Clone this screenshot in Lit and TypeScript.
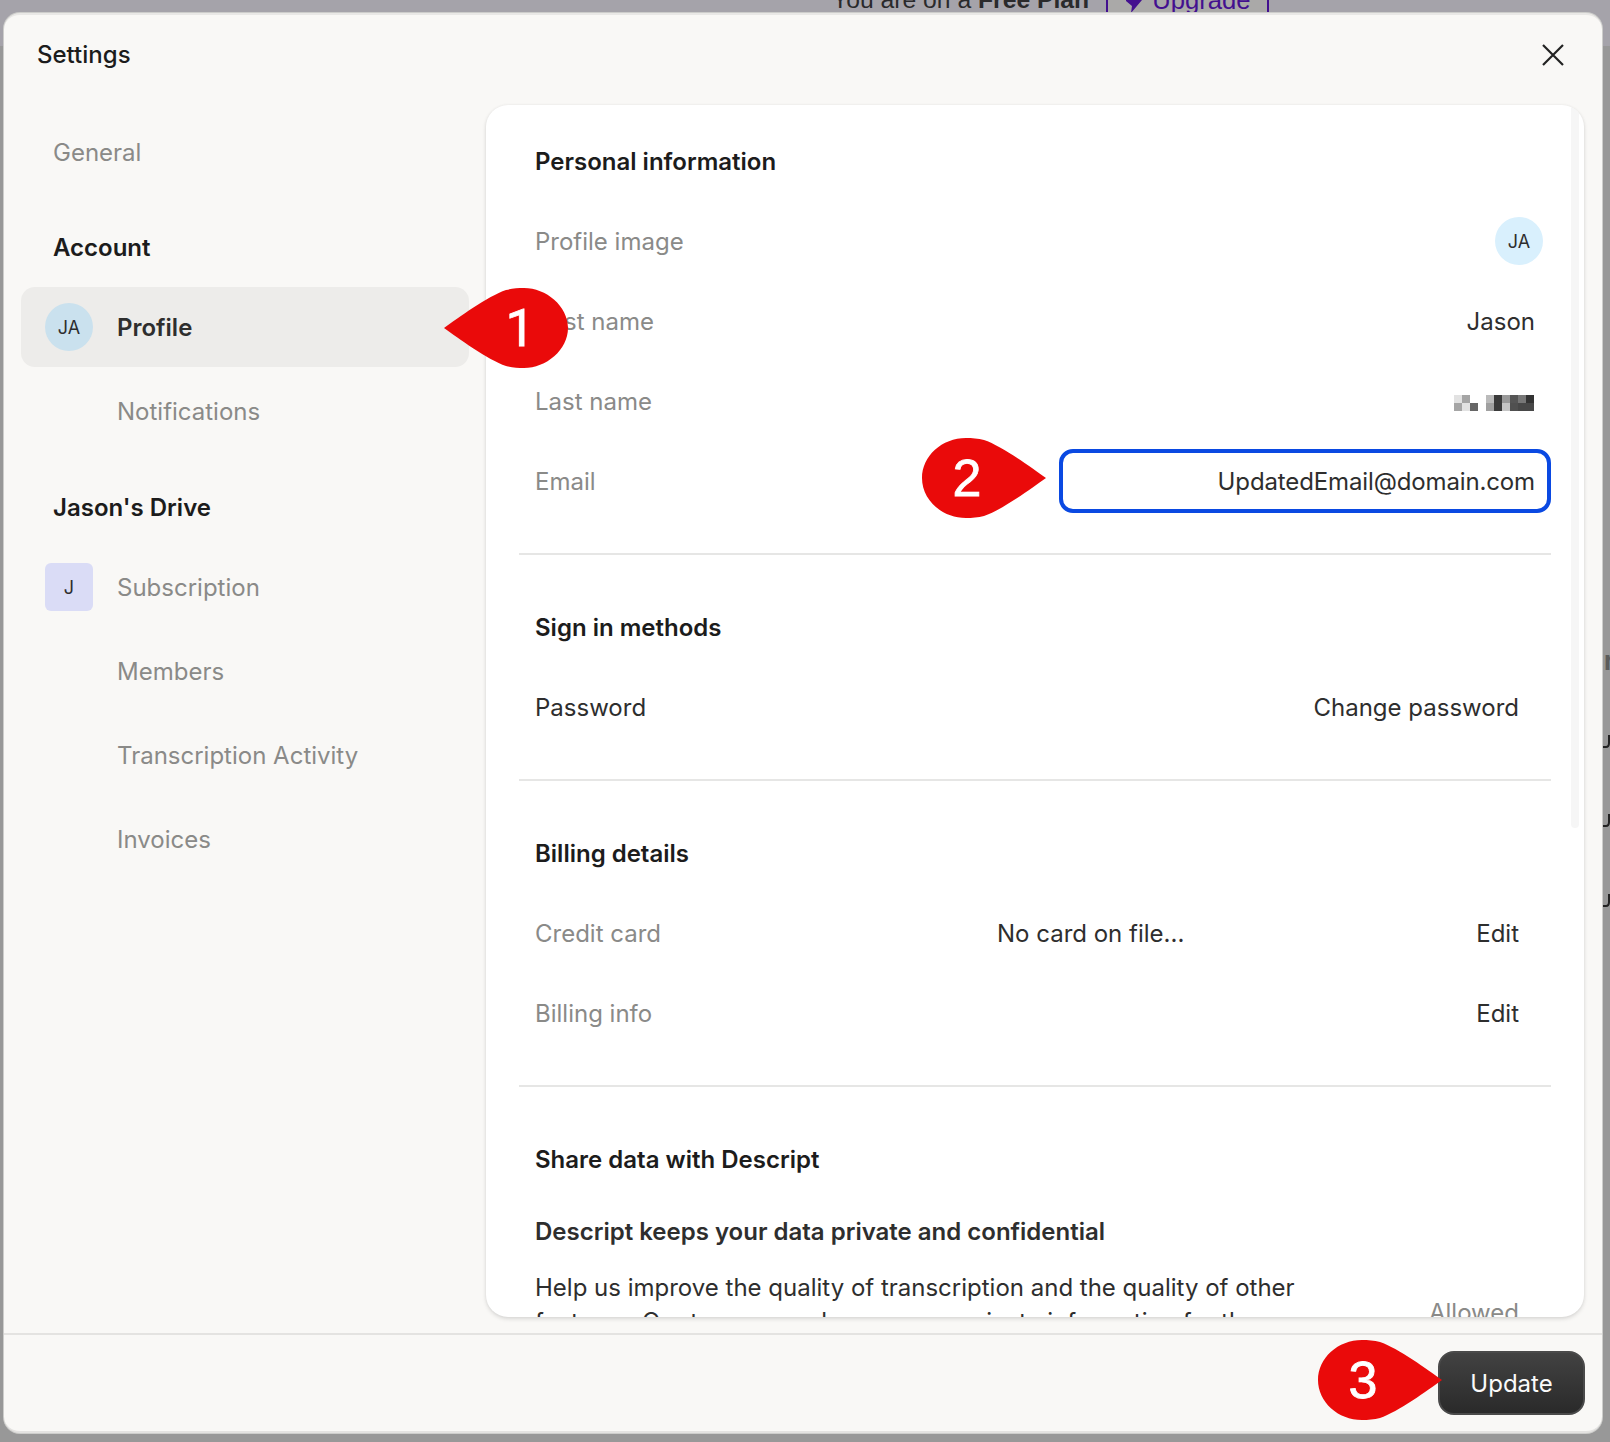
import { LitElement, html, css, svg } from "lit";
import { customElement } from "lit/decorators.js";

const PIXELS = [
  ["#e2e2e2", "#a5a5a5"],
  ["#a5a5a5", "#e2e2e2"],
  ["#ffffff", "#666666"],
  ["#ffffff", "#ffffff"],
  ["#bbbbbb", "#a0a0a0"],
  ["#3a3a3a", "#3a3a3a"],
  ["#9a9a9a", "#c5c5c5"],
  ["#555555", "#505050"],
  ["#777777", "#484848"],
  ["#333333", "#484848"],
];

// Teardrop callout: round head with a point, width 124 x height 80
const dropLeft = "M0 40 C14 30 44 8 62 2 C68 0.6 74 0 80 0 C102 0 124 18 124 40 C124 62 102 80 80 80 C74 80 68 79.4 62 78 C44 72 14 50 0 40 Z";
const dropRight = "M124 40 C110 30 80 8 62 2 C56 0.6 50 0 44 0 C20 0 0 18 0 40 C0 62 20 80 44 80 C50 80 56 79.4 62 78 C80 72 110 50 124 40 Z";

@customElement("app-root")
export class AppRoot extends LitElement {
  static styles = css`
    :host {
      display: block;
      position: relative;
      width: 1610px;
      height: 1442px;
      overflow: hidden;
      background: #989898;
      font-family: Inter, "Liberation Sans", sans-serif;
      font-size: 24px;
      color: #2e2e2e;
    }
    .banner {
      height: 46px;
      background: #a5a3aa;
      display: flex;
      justify-content: flex-start;
      align-items: flex-start;
      padding-left: 832px;
      font-family: "Liberation Sans", Arial, sans-serif;
      font-size: 24.7px;
      line-height: 26px;
      color: #2a2a2c;
      overflow: hidden;
    }
    .banner-text {
      margin-top: -13px;
      white-space: nowrap;
    }
    .banner b { font-weight: 700; }
    .upgrade {
      display: flex;
      align-items: flex-start;
      gap: 5px;
      margin-left: 17px;
      width: 163px;
      height: 46px;
      box-sizing: border-box;
      border-left: 2px solid #43108f;
      border-right: 2px solid #43108f;
      background: #aaa9a8;
      color: #43108f;
      padding-left: 17px;
      font-size: 25.7px;
    }
    .upgrade span { margin-top: -13px; }
    .upgrade svg { flex: none; }
    .peek { position: absolute; left: 1603px; }
    .peek-r {
      position: absolute;
      left: 1604px;
      top: 646px;
      font-size: 26px;
      font-weight: 700;
      line-height: 30px;
      color: #5c5c5c;
    }

    .dialog {
      position: absolute;
      left: 4px;
      top: 13px;
      width: 1598px;
      height: 1420px;
      box-sizing: border-box;
      display: flex;
      flex-direction: column;
      background: #f9f8f6;
      border-radius: 16px;
      border-top: 2px solid #e9e8e6;
      border-bottom: 2px solid #e4e3e1;
      box-shadow: 0 0 0 1px #cdcdcb;
    }
    .head {
      flex: none;
      height: 90px;
      display: flex;
      align-items: center;
      justify-content: space-between;
      padding: 0 38px 0 33px;
      box-sizing: border-box;
    }
    .title { font-weight: 500; color: #1c1c1c; margin-top: -11px; }
    .close { margin-top: -10px; display: block; }
    .body {
      flex: 1;
      min-height: 0;
      display: flex;
      padding-right: 18px;
    }
    .side {
      flex: none;
      width: 482px;
      box-sizing: border-box;
      padding: 7px 17px 0 17px;
      display: flex;
      flex-direction: column;
    }
    .general, .group {
      display: flex;
      align-items: center;
      padding-left: 32px;
      flex: none;
    }
    .general {
      height: 80px;
      margin-bottom: 4px;
      color: #8a8a88;
    }
    .group {
      box-sizing: border-box;
      margin-top: 13px;
      height: 78px;
      padding-bottom: 2px;
      font-weight: 600;
      color: #1c1c1c;
    }
    .item + .group { margin-top: 14px; }
    .item {
      height: 80px;
      margin-bottom: 4px;
      display: flex;
      align-items: center;
      gap: 24px;
      padding-left: 24px;
      border-radius: 14px;
      color: #8a8a88;
      flex: none;
    }
    .item.on {
      background: #edecea;
      color: #2e2e2e;
      font-weight: 600;
    }
    .slot { width: 48px; height: 48px; flex: none; }
    .avatar {
      width: 48px;
      height: 48px;
      flex: none;
      border-radius: 50%;
      display: flex;
      align-items: center;
      justify-content: center;
      font-size: 18px;
      font-weight: 400;
      color: #2e2e2e;
      background: #d9f0fd;
    }
    .item.on .avatar { background: #cae1ee; font-weight: 400; }
    .square {
      background: #dadcf6;
      border-radius: 6px;
      color: #2e2e2e;
    }
    .panel {
      position: relative;
      flex: 1;
      min-width: 0;
      height: 1212px;
      background: #fff;
      border-radius: 22px;
      box-shadow: 0 2px 4px rgba(0,0,0,.13), 0 0 3px rgba(0,0,0,.05);
      overflow: hidden;
    }
    .scroll {
      padding: 16px 33px 0;
    }
    .thumb {
      position: absolute;
      right: 5px;
      top: 0;
      width: 8px;
      height: 723px;
      border-radius: 4px;
      background: #f6f6f6;
    }
    .section {
      padding: 32px 0;
      border-bottom: 2px solid #e6e6e5;
    }
    .section:first-child { padding-top: 0; }
    .section:last-child { border-bottom: none; }
    .h {
      height: 80px;
      display: flex;
      align-items: center;
      padding-left: 16px;
      font-weight: 600;
      color: #1c1c1c;
    }
    .row {
      height: 80px;
      display: grid;
      grid-template-columns: 462px 1fr auto;
      align-items: center;
      padding: 0 32px 0 16px;
    }
    .row.val { padding-right: 16px; }
    .row.av { padding-right: 8px; }
    .label { color: #8a8a88; }
    .label.dark { color: #2e2e2e; }
    .row .end { grid-column: 3; text-align: right; }
    .pix {
      grid-column: 3;
      margin-right: 1px;
      display: grid;
      grid-template-columns: repeat(10, 8px);
      grid-template-rows: 8px 8px;
      grid-auto-flow: column;
      transform: translateY(2px);
    }
    .input {
      grid-column: 2 / 4;
      justify-self: end;
      width: 492px;
      height: 64px;
      box-sizing: border-box;
      margin-right: -16px;
      border: 4px solid #0a49e2;
      border-radius: 14px;
      display: flex;
      align-items: center;
      justify-content: flex-end;
      padding-right: 12px;
      letter-spacing: -0.13px;
    }
    .sub {
      font-weight: 600;
      height: 32px;
      line-height: 32px;
      padding-left: 16px;
      margin-top: 17px;
      color: #2e2e2e;
    }
    .consent {
      display: grid;
      grid-template-columns: 1fr auto;
      column-gap: 40px;
      margin-top: 23px;
      padding: 0 32px 0 16px;
    }
    .consent p { margin: 0; line-height: 34px; width: 800px; }
    .consent .label { line-height: 30px; margin-top: 27px; }
    .foot {
      flex: none;
      height: 98px;
      margin-top: 17px;
      box-sizing: border-box;
      border-top: 2px solid #e4e3e1;
      display: flex;
      align-items: flex-start;
      justify-content: flex-end;
      padding: 16px 17px 0 0;
    }
    .btn {
      width: 147px;
      height: 64px;
      box-sizing: border-box;
      border: 2px solid #4a4a4a;
      border-radius: 16px;
      background: linear-gradient(#424242, #2a2a2a);
      color: #fafafa;
      display: flex;
      align-items: center;
      justify-content: center;
    }
    .marker {
      position: absolute;
      width: 124px;
      height: 80px;
      display: flex;
      align-items: center;
      justify-content: center;
      color: #fff;
      font-family: "Liberation Sans", Arial, sans-serif;
      font-size: 52px;
      -webkit-text-stroke: 0.8px #fff;
    }
    .marker svg { position: absolute; inset: 0; }
    .marker span { position: relative; }
    .m1 { left: 444px; top: 288px; font-family: Roboto, "Liberation Sans", sans-serif; }
    .m1 span { left: 14px; }
    .m2 { left: 922px; top: 438px; }
    .m2 span { left: -17px; }
    .m3 { left: 1318px; top: 1340px; }
    .m3 span { left: -17px; }
  `;

  private drop(d: string) {
    return html`<svg viewBox="0 0 124 80" width="124" height="80">${svg`<path d=${d} fill="#ea0a0a"/>`}</svg>`;
  }

  render() {
    return html`
      <div class="banner">
        <div class="banner-text">You are on a <b>Free Plan</b></div>
        <div class="upgrade">
          <svg width="22" height="14" viewBox="0 0 22 14"><path d="M1 0 H17 L6 13 L7 6 L1 1 Z" fill="#43108f"/></svg>
          <span>Upgrade</span>
        </div>
      </div>
      <div class="peek-r">r</div>
      ${[732, 811, 891].map(
        (y) => html`<svg class="peek" style="top:${y}px" width="7" height="17" viewBox="0 0 7 17"><path d="M0 15 H3 Q6 15 6 11 V3" fill="none" stroke="#222" stroke-width="2"/></svg>`
      )}

      <div class="dialog">
        <div class="head">
          <div class="title">Settings</div>
          <svg class="close" width="22" height="22" viewBox="0 0 22 22"><path d="M1 1 L21 21 M21 1 L1 21" stroke="#222" stroke-width="2.2" fill="none"/></svg>
        </div>
        <div class="body">
          <nav class="side">
            <div class="general">General</div>
            <div class="group">Account</div>
            <div class="item on"><div class="avatar">JA</div>Profile</div>
            <div class="item"><div class="slot"></div>Notifications</div>
            <div class="group">Jason's Drive</div>
            <div class="item"><div class="avatar square">J</div>Subscription</div>
            <div class="item"><div class="slot"></div>Members</div>
            <div class="item"><div class="slot"></div>Transcription Activity</div>
            <div class="item"><div class="slot"></div>Invoices</div>
          </nav>
          <main class="panel">
            <div class="scroll">
              <section class="section">
                <div class="h">Personal information</div>
                <div class="row av"><span class="label">Profile image</span><div class="avatar end">JA</div></div>
                <div class="row val"><span class="label">First name</span><span class="end">Jason</span></div>
                <div class="row val"><span class="label">Last name</span><div class="pix">
                  ${PIXELS.flat().map((c) => html`<i style="background:${c}"></i>`)}
                </div></div>
                <div class="row val"><span class="label">Email</span><div class="input">UpdatedEmail@domain.com</div></div>
              </section>
              <section class="section">
                <div class="h">Sign in methods</div>
                <div class="row"><span class="label dark">Password</span><span class="end">Change password</span></div>
              </section>
              <section class="section">
                <div class="h">Billing details</div>
                <div class="row"><span class="label">Credit card</span><span>No card on file...</span><span class="end">Edit</span></div>
                <div class="row"><span class="label">Billing info</span><span></span><span class="end">Edit</span></div>
              </section>
              <section class="section">
                <div class="h">Share data with Descript</div>
                <div class="sub">Descript keeps your data private and confidential</div>
                <div class="consent">
                  <p>Help us improve the quality of transcription and the quality of other features. Our team may also use non-private information for the purpose of improving the product for everyone who uses it.</p>
                  <span class="label">Allowed</span>
                </div>
              </section>
            </div>
            <div class="thumb"></div>
          </main>
        </div>
        <div class="foot"><div class="btn">Update</div></div>
      </div>

      <div class="marker m1">${this.drop(dropLeft)}<span>1</span></div>
      <div class="marker m2">${this.drop(dropRight)}<span>2</span></div>
      <div class="marker m3">${this.drop(dropRight)}<span>3</span></div>
    `;
  }
}
